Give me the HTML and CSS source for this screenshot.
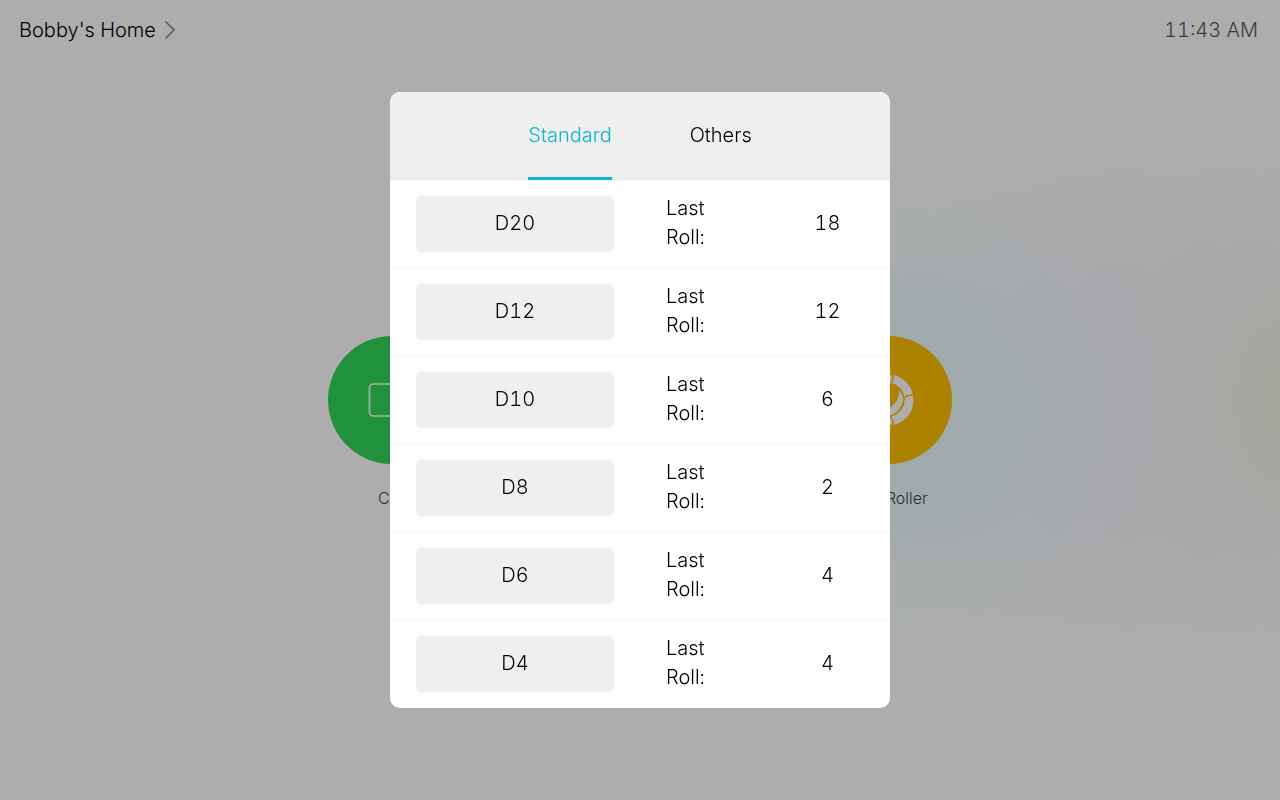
FILE: index.html
```html
<!DOCTYPE html>
<html lang="en">
<head>
<meta charset="utf-8">
<title>Dice Roller</title>
<link rel="stylesheet" href="styles.css">
</head>
<body>
<div class="home">
  <header class="topbar">
    <a class="room" href="#">Bobby's Home
      <svg class="chevron" width="12" height="20" viewBox="0 0 12 20" aria-hidden="true"><path d="M1.500 1.500l8.500 8.500-8.500 8.500" fill="none" stroke="#5c5c5c" stroke-width="1.600"/></svg>
    </a>
    <time class="clock">11:43 AM</time>
  </header>
  <main class="apps">
    <button class="app" type="button">
      <span class="disc disc-call">
        <svg width="64" height="64" viewBox="0 0 64 64" aria-hidden="true"><rect x="9.500" y="16" width="36" height="32" rx="4" fill="none" stroke="#adadad" stroke-width="1.700"/><path d="M46 28l9-7v22l-9-7" fill="none" stroke="#adadad" stroke-width="1.700"/></svg>
      </span>
      <span class="app-name">Call</span>
    </button>
    <button class="app" type="button">
      <span class="disc disc-dice">
        <svg width="64" height="64" viewBox="0 0 64 64" aria-hidden="true">
          <circle cx="32" cy="32" r="21" fill="none" stroke="#adadad" stroke-width="9"/>
          <path d="M43 22Q44 33 34 39.500L24 42V46L36 48Q47 43 47.500 32Q47 26 43 22z" fill="#adadad"/>
          <path d="M35 6q4 4 0 9M35 15.500Q46.500 19 48 31Q46 44 34 48.500q5 4 2 9M48 31q2-5 10-3.500" fill="none" stroke="#ad8200" stroke-width="1.500"/>
        </svg>
      </span>
      <span class="app-name">Dice Roller</span>
    </button>
  </main>
</div>
<div class="overlay">
  <section class="panel" role="dialog" aria-label="Dice">
    <nav class="tabs">
      <button class="tab tab-active" type="button">Standard</button>
      <button class="tab" type="button">Others</button>
    </nav>
    <div class="row"><button class="die" type="button">D20</button><span class="label">Last Roll:</span><output class="value">18</output></div>
    <div class="row"><button class="die" type="button">D12</button><span class="label">Last Roll:</span><output class="value">12</output></div>
    <div class="row"><button class="die" type="button">D10</button><span class="label">Last Roll:</span><output class="value">6</output></div>
    <div class="row"><button class="die" type="button">D8</button><span class="label">Last Roll:</span><output class="value">2</output></div>
    <div class="row"><button class="die" type="button">D6</button><span class="label">Last Roll:</span><output class="value">4</output></div>
    <div class="row"><button class="die" type="button">D4</button><span class="label">Last Roll:</span><output class="value">4</output></div>
  </section>
</div>
</body>
</html>
```

FILE: styles.css
```css
* { box-sizing: border-box; }
body {
  margin: 0;
  font-family: Inter, "Liberation Sans", sans-serif;
  font-weight: 300;
  font-size: 20px;
  font-variant-numeric: tabular-nums;
  color: #000;
}
button {
  font: inherit;
  font-variant-numeric: inherit;
  color: inherit;
  border: 0;
  padding: 0;
  background: none;
  cursor: pointer;
}
.home {
  min-height: 100vh;
  display: flex;
  flex-direction: column;
  background:
    radial-gradient(ellipse 300px 270px at 900px 410px, rgba(157, 170, 172, 1), rgba(158, 170, 172, .9) 30%, rgba(163, 171, 173, .5) 60%, rgba(172, 173, 173, 0)),
    radial-gradient(ellipse 160px 290px at 100% 400px, rgba(165, 166, 156, 1), rgba(167, 167, 162, .6) 40%, rgba(173, 173, 173, 0)),
    radial-gradient(ellipse 280px 270px at 1125px 400px, #a7a5aa, rgba(168, 167, 171, .7) 50%, rgba(173, 173, 173, 0)),
    #adadad;
}
.topbar {
  display: flex;
  justify-content: space-between;
  align-items: center;
  height: 60px;
  padding: 0 22px 0 19px;
}
.room {
  display: flex;
  align-items: center;
  gap: 8px;
  color: #000;
  text-decoration: none;
}
.clock {
  color: #3c3c3c;
}
.apps {
  flex: 1;
  display: flex;
  justify-content: center;
  align-items: center;
  gap: 368px;
  padding-bottom: 16px;
}
.app {
  display: flex;
  flex-direction: column;
  align-items: center;
  gap: 24px;
  width: 128px;
  font-size: 16px;
  line-height: 20px;
  color: #2c2c2c;
}
.disc {
  display: flex;
  justify-content: center;
  align-items: center;
  width: 128px;
  height: 128px;
  border-radius: 50%;
}
.disc-call { background: #22913b; }
.disc-dice { background: #ad8200; }
.overlay {
  position: fixed;
  inset: 0;
  display: flex;
  justify-content: center;
  align-items: center;
}
.panel {
  width: 500px;
  border-radius: 10px;
  overflow: hidden;
  background: #fff;
}
.tabs {
  display: flex;
  justify-content: center;
  gap: 78px;
  height: 88px;
  background: #efefef;
}
.tab {
  border-bottom: 3px solid transparent;
}
.tab-active {
  color: #0fb5d4;
  border-bottom-color: #0fb5d4;
}
.row {
  display: grid;
  grid-template-columns: 2fr 1fr 1fr;
  align-items: center;
  height: 88px;
  padding-bottom: 1px;
  border-top: 1px solid #f4f4f4;
}
.die {
  height: 56px;
  margin: 0 26px;
  padding-bottom: 2px;
  border-radius: 5px;
  background: #efefef;
}
.label {
  padding: 0 26px 2px;
  line-height: 29px;
}
.value {
  padding-bottom: 2px;
  text-align: center;
}
```
